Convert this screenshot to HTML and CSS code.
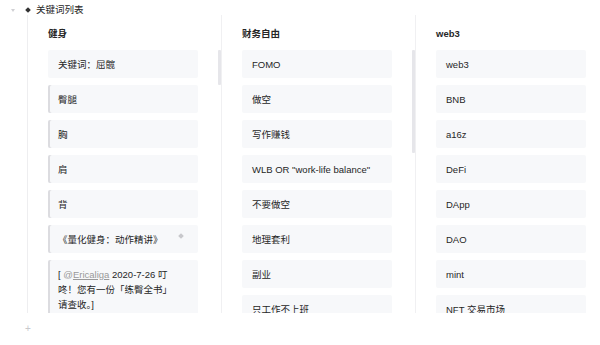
FILE: index.html
```html
<!DOCTYPE html>
<html lang="zh-CN">
<head>
  <meta charset="UTF-8">
  <meta name="viewport" content="width=device-width, initial-scale=1.0">
  <title>关键词列表</title>
  <link rel="stylesheet" href="styles.css">
</head>
<body>
  <div class="title">
    <span class="toggle"></span>
    <span class="bullet"></span>
    <span class="title-text">关键词列表</span>
  </div>

  <div class="board">
    <div class="column">
      <div class="column-title">健身</div>
      <div class="cards">
        <div class="card">关键词：屈髋</div>
        <div class="card card-quote">臀腿</div>
        <div class="card card-quote">胸</div>
        <div class="card card-quote">肩</div>
        <div class="card card-quote">背</div>
        <div class="card card-quote">《量化健身：动作精讲》<span class="card-dot"></span></div>
        <div class="card card-quote card-wide">[ <a class="mention" href="#">@<u>Ericaliga</u></a> 2020-7-26 叮咚！您有一份「练臀全书」请查收。]</div>
      </div>
      <div class="thumb thumb-short"></div>
    </div>

    <div class="column">
      <div class="column-title">财务自由</div>
      <div class="cards">
        <div class="card">FOMO</div>
        <div class="card">做空</div>
        <div class="card">写作赚钱</div>
        <div class="card">WLB OR "work-life balance"</div>
        <div class="card">不要做空</div>
        <div class="card">地理套利</div>
        <div class="card">副业</div>
        <div class="card">只工作不上班</div>
      </div>
      <div class="thumb thumb-long"></div>
    </div>

    <div class="column">
      <div class="column-title">web3</div>
      <div class="cards">
        <div class="card">web3</div>
        <div class="card">BNB</div>
        <div class="card">a16z</div>
        <div class="card">DeFi</div>
        <div class="card">DApp</div>
        <div class="card">DAO</div>
        <div class="card">mint</div>
        <div class="card">NFT 交易市场</div>
      </div>
    </div>
  </div>

  <div class="add">+</div>
</body>
</html>
```

FILE: styles.css
```css
/* Outline page with a kanban board block */
body, html {
  margin: 0;
  padding: 0;
}

body {
  font-family: "Liberation Sans", "Noto Sans CJK SC", sans-serif;
  font-size: 9.5px;
  color: #262626;
  background: #fff;
  width: 600px;
  height: 345px;
  overflow: hidden;
}

.title {
  height: 15px;
  padding-top: 5px;
  box-sizing: border-box;
  display: flex;
  align-items: center;
  line-height: 10px;
}

/* small collapse arrow */
.toggle {
  width: 0;
  height: 0;
  border-left: 2.5px solid transparent;
  border-right: 2.5px solid transparent;
  border-top: 3px solid #d0d0d4;
  margin-left: 11px;
  margin-right: 11px;
}

.bullet {
  width: 4px;
  height: 4px;
  background: #333;
  transform: rotate(45deg);
  margin-right: 6px;
}

.board {
  display: flex;
  height: 298px;
  margin-left: 27px;
  border-left: 1px solid #eeeef0;
  overflow: hidden;
}

.column {
  position: relative;
  flex: 0 0 194px;
  padding: 12px 0 0 20px;
  box-sizing: border-box;
  border-right: 1px solid #f0f0f2;
}

.column:last-child {
  flex-basis: 260px;
  border-right: none;
}

.column-title {
  font-weight: bold;
  line-height: 14px;
  margin-bottom: 9px;
}

.cards {
  display: flex;
  flex-direction: column;
  gap: 7px;
  width: 150px;
}

.card {
  position: relative;
  background: #f7f8fa;
  border-radius: 2px;
  padding: 6.5px 10px;
  line-height: 15px;
}

.card-quote {
  box-shadow: inset 2px 0 0 #dcdce0;
}

.card-wide {
  padding-right: 22px;
}

.card-dot {
  position: absolute;
  top: 9px;
  right: 15px;
  width: 4px;
  height: 4px;
  background: #c8c8cc;
  transform: rotate(45deg);
}

.mention {
  color: #999;
  text-decoration: none;
}

.thumb {
  position: absolute;
  top: 35px;
  right: 0;
  width: 3px;
  background: #e6e6ea;
  border-radius: 1px;
}

.thumb-short {
  height: 35px;
}

.thumb-long {
  height: 103px;
}

.add {
  color: #c8c8cc;
  font-size: 10px;
  line-height: 10px;
  margin: 11px 0 0 25px;
}
```
